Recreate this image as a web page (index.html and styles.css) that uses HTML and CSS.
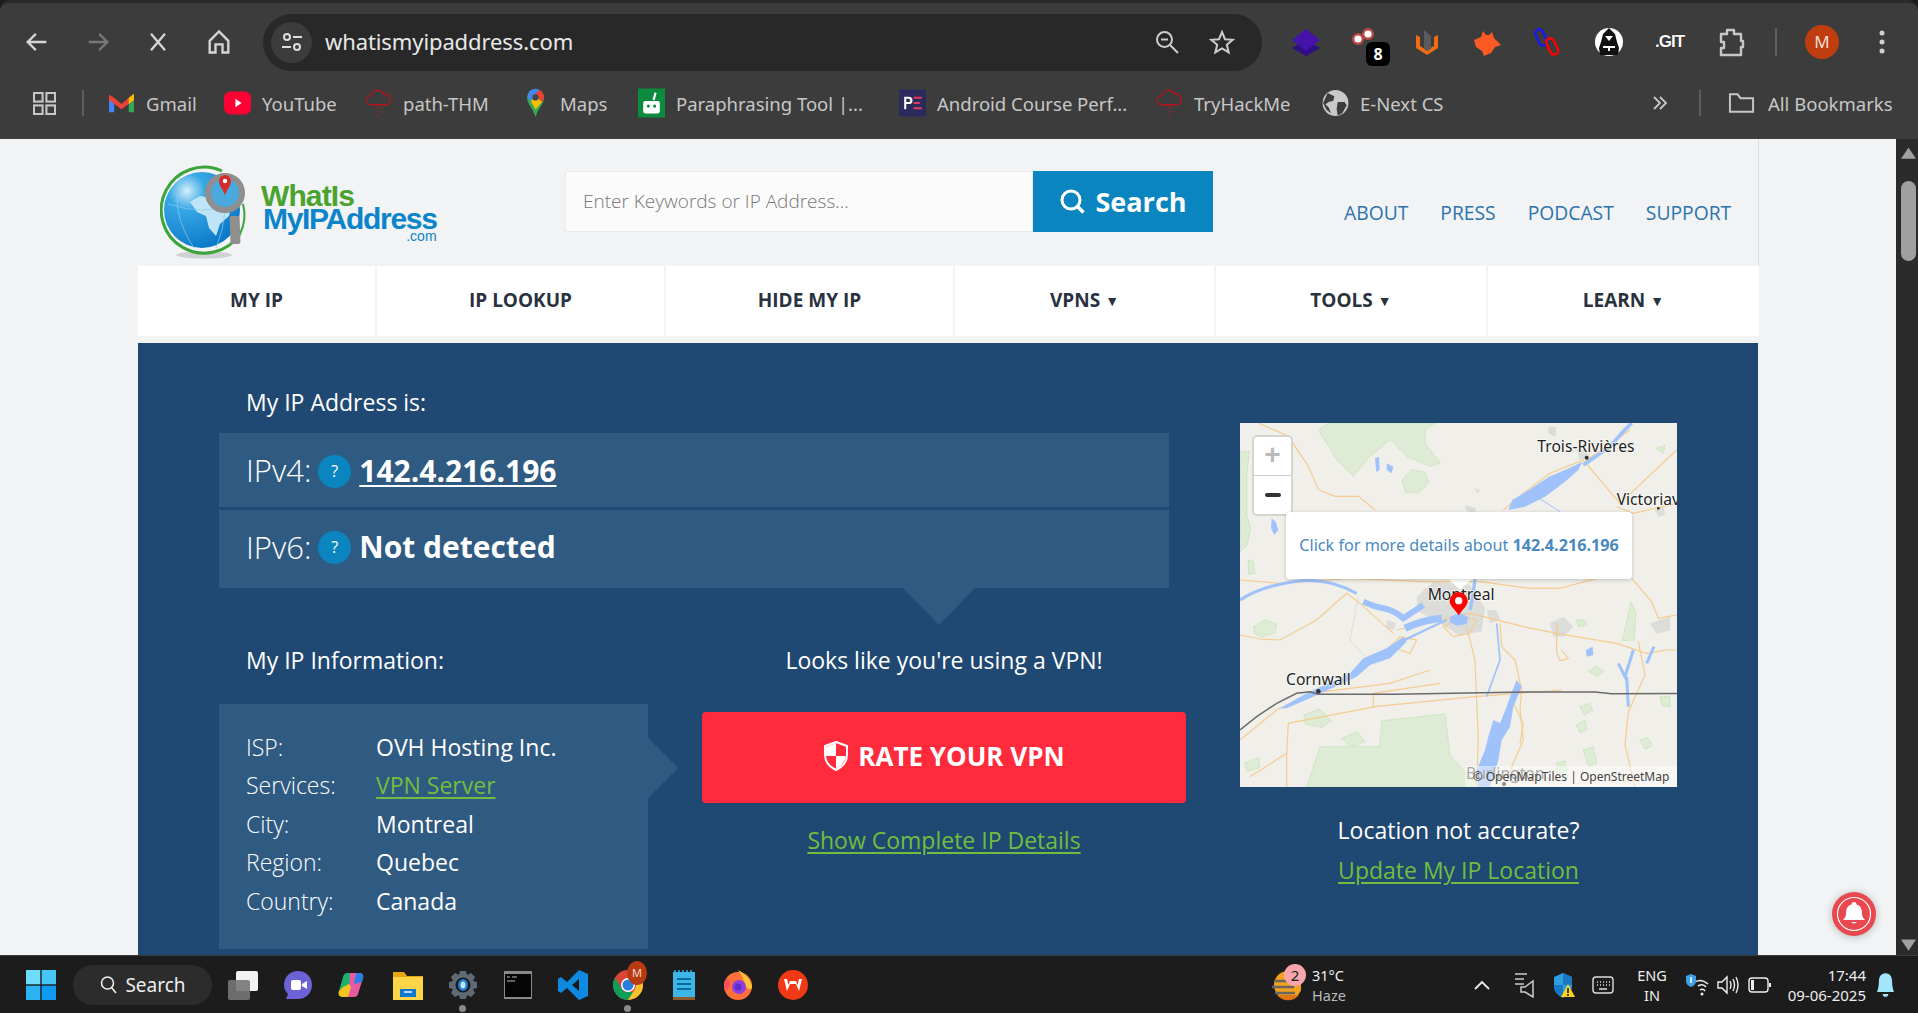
FILE: index.html
```html
<!DOCTYPE html>
<html lang="en">
<head>
    <meta charset="UTF-8">
    <title>What Is My IP Address</title>
    <link rel="stylesheet" href="styles.css">
</head>
<body>

<div class="browser">

    <!-- toolbar -->
    <div class="toolbar">
        <div class="nav-btns">
            <svg class="tb-icon" viewBox="0 0 24 24"><path d="M20 12H4M11 5l-7 7 7 7" fill="none" stroke="#d6d6d6" stroke-width="2"/></svg>
            <svg class="tb-icon" viewBox="0 0 24 24"><path d="M4 12h16M13 5l7 7-7 7" fill="none" stroke="#777" stroke-width="2"/></svg>
            <svg class="tb-icon" viewBox="0 0 24 24"><path d="M6 5l12 14M18 5L6 19" fill="none" stroke="#d6d6d6" stroke-width="2"/></svg>
            <svg class="tb-icon" viewBox="0 0 24 24"><path d="M4 11l8-8 8 8v10h-5v-7H9v7H4z" fill="none" stroke="#d6d6d6" stroke-width="2"/></svg>
        </div>
        <div class="address">
            <div class="site-chip">
                <svg width="22" height="22" viewBox="0 0 22 22"><circle cx="6" cy="6" r="3" fill="none" stroke="#ddd" stroke-width="2"/><path d="M12 6h9M1 16h9" stroke="#ddd" stroke-width="2"/><circle cx="16" cy="16" r="3" fill="none" stroke="#ddd" stroke-width="2"/></svg>
            </div>
            <span class="url">whatismyipaddress.com</span>
            <svg class="addr-icon zoom-out" viewBox="0 0 26 26"><circle cx="10.500" cy="10.500" r="7.500" fill="none" stroke="#ccc" stroke-width="2"/><path d="M7 10.500h7M16 16l8 8" stroke="#ccc" stroke-width="2"/></svg>
            <svg class="addr-icon" viewBox="0 0 26 26"><path d="M13 3l3 7.200 7.700.6-5.900 5 1.900 7.500L13 19.300l-6.700 4 1.900-7.500-5.900-5 7.700-.6z" fill="none" stroke="#ccc" stroke-width="2"/></svg>
        </div>
        <div class="extensions">
            <svg class="ext" viewBox="0 0 30 30"><path d="M15 13l14 8-14 8-14-8z" fill="#2d0e84"/><path d="M15 2l14 11-14 11L1 13z" fill="#4513a8"/></svg>
            <div class="ext ext-dots">
                <svg width="30" height="30" viewBox="0 0 30 30"><circle cx="8" cy="12" r="6" fill="#b84a4a"/><circle cx="18" cy="7" r="6" fill="#b84a4a"/><circle cx="8" cy="12" r="3.600" fill="#fff"/><circle cx="18" cy="7" r="3.600" fill="#fff"/></svg>
                <span class="ext-badge">8</span>
            </div>
            <svg class="ext" viewBox="0 0 30 30"><path d="M4 8v13l11 7 11-7V8l-4 2v9l-7 4-7-4v-9z" fill="#f26b12"/><path d="M12 3l7 6v13l-4 2-3-2z" fill="#5b5b5b"/></svg>
            <svg class="ext" viewBox="0 0 30 30"><path d="M2 13l7-3 2-6 3 4h3l3-3 2 6 7 7-6 2-4 6-7 3-2-5-6-4z" fill="#fb5b22"/></svg>
            <svg class="ext" viewBox="0 0 30 30"><g fill="none" stroke-width="2.500"><rect x="5" y="2" width="8" height="17" rx="4" transform="rotate(-25 9 10)" stroke="#1a1aee"/><rect x="16" y="11" width="8" height="17" rx="4" transform="rotate(-25 20 19)" stroke="#f00"/></g></svg>
            <svg class="ext" viewBox="0 0 30 30"><circle cx="15" cy="15" r="14" fill="#fff"/><path d="M15 1l6 6 2 8 2 6-1 7H6l-1-7 2-6 2-8z" fill="#111"/><path d="M11 9h8l-4 5z" fill="#fff"/><rect x="9" y="19" width="12" height="2" fill="#fff"/><rect x="14" y="19" width="2" height="5" fill="#fff"/></svg>
            <span class="ext ext-git">.GIT</span>
            <svg class="ext" viewBox="0 0 30 30"><path d="M5 7h6V3h7v4h7v7h2v6h-2v8H5v-7h3v-6H5z" fill="none" stroke="#c7c7c7" stroke-width="2.400" stroke-linejoin="round"/></svg>
            <span class="tb-divider"></span>
            <span class="avatar">M</span>
            <svg class="kebab" viewBox="0 0 8 28"><circle cx="4" cy="5" r="2.500" fill="#d0d0d0"/><circle cx="4" cy="14" r="2.500" fill="#d0d0d0"/><circle cx="4" cy="23" r="2.500" fill="#d0d0d0"/></svg>
        </div>
    </div>

    <!-- bookmarks -->
    <div class="bookmarks">
        <svg class="bm-apps" viewBox="0 0 24 24"><g fill="none" stroke="#c7c7c7" stroke-width="2.200"><rect x="1" y="1" width="9" height="9"/><rect x="14" y="1" width="9" height="9"/><rect x="1" y="14" width="9" height="9"/><rect x="14" y="14" width="9" height="9"/></g></svg>
        <span class="bm-divider"></span>
        <div class="bm"><svg viewBox="0 0 26 22"><path d="M1 5v15h5V9z" fill="#4285f4"/><path d="M25 5v15h-5V9z" fill="#34a853"/><path d="M1 3l5 3 7 6 7-6 5-3v5l-12 9L1 8z" fill="#ea4335"/><path d="M20 6l5-4v6l-5 4z" fill="#fbbc04"/></svg><span>Gmail</span></div>
        <div class="bm"><svg viewBox="0 0 26 26"><rect y="2" width="26" height="22" rx="6" fill="#ff0033"/><path d="M11 9l6 4-6 4z" fill="#fff"/></svg><span>YouTube</span></div>
        <div class="bm"><svg viewBox="0 0 30 34"><path d="M6 19a5 5 0 0 1 0-10 8 8 0 0 1 15-2 6 6 0 0 1 3 12z" fill="none" stroke="#b3141c" stroke-width="1.500"/><path d="M12 21h7v3h-7zM14 26h6v2h-6zM12 30h5v3h-5z" fill="#5b3436"/></svg><span>path-THM</span></div>
        <div class="bm"><svg viewBox="0 0 20 32"><path d="M10 1a9 9 0 0 1 9 9c0 7-6 11-9 21C7 21 1 17 1 10a9 9 0 0 1 9-9z" fill="#34a853"/><path d="M3 4a9 9 0 0 1 11-2l-9 12-3-4z" fill="#4285f4"/><path d="M14 2a9 9 0 0 1 5 8c0 2-1 4-2 5l-8-8z" fill="#ea4335"/><path d="M17 15l-7 8-5-9 5-5z" fill="#fbbc04"/><circle cx="10" cy="10" r="3.300" fill="#444"/></svg><span>Maps</span></div>
        <div class="bm"><svg viewBox="0 0 26 28"><rect width="26" height="28" fill="#0c8a3e"/><rect x="5" y="12" width="16" height="12" rx="2" fill="#fff"/><circle cx="10" cy="17" r="1.500" fill="#0c8a3e"/><circle cx="16" cy="17" r="1.500" fill="#0c8a3e"/><path d="M15 11l2-7" stroke="#fff" stroke-width="2"/></svg><span>Paraphrasing Tool |...</span></div>
        <div class="bm"><svg viewBox="0 0 26 26"><rect width="26" height="26" fill="#2b2a5c"/><path d="M5 7h4.500a3 3 0 0 1 0 7H7v5H5zM7 9v3h2.300a1.500 1.500 0 0 0 0-3z" fill="#fff"/><path d="M14 7h8v2h-8zM14 12h6v2h-6zM14 17h8v2h-8z" fill="#e8395b"/></svg><span>Android Course Perf...</span></div>
        <div class="bm"><svg viewBox="0 0 30 34"><path d="M6 19a5 5 0 0 1 0-10 8 8 0 0 1 15-2 6 6 0 0 1 3 12z" fill="none" stroke="#b3141c" stroke-width="1.500"/><path d="M12 21h7v3h-7zM14 26h6v2h-6zM12 30h5v3h-5z" fill="#5b3436"/></svg><span>TryHackMe</span></div>
        <div class="bm"><svg viewBox="0 0 24 24"><circle cx="12" cy="12" r="11.500" fill="#c9c9c9"/><path d="M5 3l6 3-1 4-4 1-3 2 3 3 2 5-4-3-3-6zM14 11h6l2 3-4 7-4 2-1-6z" fill="#3c3c3c"/></svg><span>E-Next CS</span></div>
        <svg class="bm-more" viewBox="0 0 18 18"><path d="M3 3l6 6-6 6M9 3l6 6-6 6" fill="none" stroke="#c7c7c7" stroke-width="1.800"/></svg>
        <span class="bm-divider"></span>
        <div class="bm bm-all"><svg viewBox="0 0 28 24"><path d="M2 21V3h8l3 4h13v14z" fill="none" stroke="#c7c7c7" stroke-width="2"/></svg><span>All Bookmarks</span></div>
    </div>

    <!-- page viewport -->
    <div class="viewport">
        <div class="page">
            <div class="site">
                <div class="site-head">
                    <div class="logo">
                        <svg class="logo-globe" viewBox="0 0 90 95">
                            <defs>
                                <radialGradient id="globeFill" cx="30%" cy="25%" r="80%">
                                    <stop offset="0" stop-color="#d5eefb"/>
                                    <stop offset=".3" stop-color="#37a8e6"/>
                                    <stop offset="1" stop-color="#0a78c8"/>
                                </radialGradient>
                            </defs>
                            <ellipse cx="44" cy="91" rx="28" ry="3.500" fill="#bbb" opacity=".6"/>
                            <path d="M62 7A43 43 0 1 0 80 70" fill="none" stroke="#3ba53a" stroke-width="3"/>
                            <path d="M83 40a43 43 0 0 1-3 30" fill="none" stroke="#3ba53a" stroke-width="2"/>
                            <circle cx="42" cy="46" r="38" fill="url(#globeFill)"/>
                            <path d="M30 38l10-6 12 2 10-4 10 8-3 14-9 8-4 12-7-8-3-12-9-4z" fill="#bfe4f7"/>
                            <path d="M8 40q34 12 70 0M20 14q-10 34 14 70M60 12q12 34-4 72" fill="none" stroke="#8cc9ec" stroke-width=".7"/>
                            <circle cx="65" cy="29" r="17" fill="#4aa9dd" stroke="#8f8f8f" stroke-width="6"/>
                            <path d="M65 11a6 6 0 0 1 6 6c0 5-4 8-6 14-2-6-6-9-6-14a6 6 0 0 1 6-6z" fill="#d62b27"/>
                            <circle cx="65" cy="17" r="2.200" fill="#fff"/>
                            <rect x="70" y="52" width="10" height="28" rx="2" transform="rotate(-2 75 66)" fill="#8f8f8f"/>
                        </svg>
                        <div class="logo-text">
                            <span class="logo-what">WhatIs</span>
                            <span class="logo-my">MyIPAddress</span>
                            <span class="logo-com">.com</span>
                        </div>
                    </div>
                    <div class="search">
                        <div class="search-input">Enter Keywords or IP Address...</div>
                        <div class="search-btn">
                            <svg width="27" height="27" viewBox="0 0 27 27"><circle cx="12" cy="12" r="9" fill="none" stroke="#fff" stroke-width="3"/><path d="M18.500 18.500l6 6" stroke="#fff" stroke-width="3.500"/></svg>
                            <span>Search</span>
                        </div>
                    </div>
                    <div class="head-links">
                        <a>ABOUT</a>
                        <a>PRESS</a>
                        <a>PODCAST</a>
                        <a>SUPPORT</a>
                    </div>
                </div>

                <ul class="main-nav">
                    <li>MY IP</li>
                    <li>IP LOOKUP</li>
                    <li>HIDE MY IP</li>
                    <li>VPNS <i class="caret">▼</i></li>
                    <li>TOOLS <i class="caret">▼</i></li>
                    <li>LEARN <i class="caret">▼</i></li>
                </ul>

                <div class="panel">
                    <div class="panel-main">
                        <div class="ip-title">My IP Address is:</div>
                        <div class="ip-box">
                            <div class="ip-row ip-row-4">
                                <span class="ip-label">IPv4:</span><span class="help">?</span><a class="ip-value ip-link">142.4.216.196</a>
                            </div>
                            <div class="ip-row ip-row-6">
                                <span class="ip-label">IPv6:</span><span class="help">?</span><span class="ip-value">Not detected</span>
                            </div>
                            <span class="ip-pointer"></span>
                        </div>
                        <div class="lower">
                            <div class="info-col">
                                <div class="info-title">My IP Information:</div>
                                <div class="info-box">
                                    <div class="info-row"><span>ISP:</span><b>OVH Hosting Inc.</b></div>
                                    <div class="info-row"><span>Services:</span><a class="green-link">VPN Server</a></div>
                                    <div class="info-row"><span>City:</span><b>Montreal</b></div>
                                    <div class="info-row"><span>Region:</span><b>Quebec</b></div>
                                    <div class="info-row"><span>Country:</span><b>Canada</b></div>
                                    <span class="info-pointer"></span>
                                </div>
                            </div>
                            <div class="vpn-col">
                                <div class="vpn-text">Looks like you're using a VPN!</div>
                                <div class="vpn-btn">
                                    <svg width="26" height="30" viewBox="0 0 26 30"><path d="M13 1l11 4v9c0 7-5 12-11 15C7 26 2 21 2 14V5z" fill="none" stroke="#fff" stroke-width="2"/><path d="M13 2v13H3V6zM13 15h10c-1 6-5 10-10 13z" fill="#fff"/></svg>
                                    <span>RATE YOUR VPN</span>
                                </div>
                                <a class="green-link vpn-details">Show Complete IP Details</a>
                            </div>
                        </div>
                    </div>

                    <div class="panel-side">
                        <div class="map">
                            <svg class="map-art" viewBox="30 39 1311 1092">
                                <rect x="30" y="39" width="1311" height="1092" fill="#f0efe9"/>
                                <!-- forest -->
                                <g fill="#dfecd5" stroke="#a9dc9c" stroke-width="2.500" stroke-dasharray="3 3">
                                    <path d="M265 60l30-21h320l-30 20 0 40 45 60-30 10-70-30-50-50-60 50-50 60-50-50-30-50z"/>
                                    <path d="M30 125h28l-8 70 0 120 12 40-10 50-22 20z"/>
                                    <path d="M516 210l30-32 40 10 10 30-30 30-40-2z"/>
                                    <path d="M70 650l35-20 35 12-5 25-40 15-22-12z"/>
                                    <path d="M1178 690l25-115 15 30-5 85-35 2z"/>
                                    <path d="M1075 785l25-18 22 18-20 14z"/>
                                    <path d="M1050 890l30-10 8 22-25 12zM1230 990l22-6 16 22-22 12zM1040 945l25-15 5 30-20 8z"/>
                                    <path d="M222 915l45-18 38 35-30 20-50-10z"/>
                                    <path d="M270 1010l180 0 5-78 190-20 15 125 90 94H230z"/>
                                    <path d="M335 985l45-20 25 30-45 15zM45 1060l40-18 5 30-40 12z"/>
                                    <path d="M1060 1020l30-10 10 50-25 10zM1290 860l30 0 0 30-25-4zM1280 115l25-10-5 25zM1040 630l25 0 5 15-25 5z"/>
                                    <path d="M54 450l16 4 4 38-18 0zM980 1060l25-8 5 30-30 8z"/>
                                </g>
                                <!-- built up areas -->
                                <g fill="#dcdcd9">
                                    <path d="M560 560l50-45 110 10 45 70-10 70-70 10-60-40-60-30zM960 640l40-20 30 30-30 30-30 0zM1260 640l60-20 0 40-40 12zM770 600l30 0 10 30-30 10zM470 630l30 10-10 20-20-5z"/>
                                    <path d="M705 285l35 10-8 16-25-10zM1040 120l30 0 10 20-30 10zM955 50l25 0-5 30-20-10zM730 235l20 5-5 10zM1275 300l25-10 5 25-20 5z"/>
                                </g>
                                <!-- roads -->
                                <g fill="none" stroke="#f6cb90" stroke-width="3.500">
                                    <path d="M85 39l90 40 60 90 30 70 50 20 70 0 50 40"/>
                                    <path d="M30 510l120 10 210-15 220 10 170 0 150 20 90 0 110-30"/>
                                    <path d="M1205 505l60 70 20 50 55-10"/>
                                    <path d="M30 675l60 12 60 3 110-60 90-80 40 30 100 90"/>
                                    <path d="M500 660l130-30 90-20 40 10 120 30 100 20 180 30 90 30 60-10 40 0"/>
                                    <path d="M710 650l25 100 5 130 5 100-5 150"/>
                                    <path d="M810 640l5 70 40 40 20 90-5 60 10 90-30 70-30 70"/>
                                    <path d="M30 990l110-90 100-50 240-30 120-40"/>
                                    <path d="M60 1100l110-70 5-90 260-50 300-30 130-10 130-10"/>
                                    <path d="M1225 695l20 100-50 110-10 100 30 126"/>
                                    <path d="M980 640v90l10 22 25-6-20-26"/>
                                    <path d="M820 300l60-50 80-60 100-40 110 130 170-160"/>
                                    <path d="M1070 150l130-90M1160 290l50 20 131-30"/>
                                    <path d="M480 710l60 20 20-40-50-10zM640 650l30 30 50-10 20-40-40-10z"/>
                                    <path d="M170 1030l0 101M430 890l0-40 200-30M850 880l30 60-10 60"/>
                                </g>
                                <!-- water -->
                                <g fill="#a0c2fb">
                                    <path d="M835 300l12-30 50-30 60-40 60-25 40-20-12 25-40 35-60 45-60 30z"/>
                                    <path d="M860 810l15 20-25 60-10 60-25 40-10 60-25 80h-35l-5-50 25-60 10-40 15-50 20 10 20-50 10-30z"/>
                                    <path d="M435 145l12-5 2 40-10 6zM470 160l20 10-5 20-15-10zM125 325l12 10 8 25-12 15-10-20zM1068 720l20-10 2 25-20 5z"/>
                                    <path d="M660 620l30-12 25 14-5 20-30 5-20-10z"/>
                                    <path d="M150 895l80-45 130-60 40-45 70-30 50-35 10 15-50 50-60 20-40 35-130 60-80 35z"/>
                                </g>
                                <g fill="none" stroke="#a0c2fb">
                                    <path d="M30 570q60-40 160-55t190 35" stroke-width="9"/>
                                    <path d="M400 575q30 15 60 20t60 30q30-20 60-40" stroke-width="18"/>
                                    <path d="M525 655q50-25 110-30" stroke-width="22"/>
                                    <path d="M520 692q60-30 130-62" stroke-width="7"/>
                                    <path d="M720 600l10-50 5-45" stroke-width="10"/>
                                    <path d="M800 640l10 110-40 110" stroke-width="5"/>
                                    <path d="M1060 165l80-55 35-40 30-31" stroke-width="11"/>
                                    <path d="M920 260l70 45" stroke-width="3"/>
                                    <path d="M1165 760l20 40 25-80M1190 800l5 90M1250 760l22-50" stroke-width="9"/>
                                </g>
                                <path d="M360 690l25-130M360 690l45 50" fill="none" stroke="#bbb" stroke-width="2" stroke-dasharray="3 3"/>
                                <path d="M30 960l50-40 60-40 60-30 40-5 25 8 230 0 395-7 205 0 50 5 246-1" fill="none" stroke="#6a6a6a" stroke-width="4.500"/>
                                <g fill="#333">
                                    <circle cx="1070" cy="143" r="6"/>
                                    <circle cx="265" cy="844" r="7"/>
                                    <circle cx="822" cy="1122" r="6"/>
                                    <circle cx="1285" cy="295" r="4"/>
                                </g>
                                <g class="map-label">
                                    <text x="922" y="126">Trois-Rivières</text>
                                    <text x="1160" y="285">Victoriav</text>
                                    <text x="593" y="570">Montreal</text>
                                    <text x="168" y="825">Cornwall</text>
                                    <text class="map-faint" x="708" y="1108">Burlington</text>
                                </g>
                                <path d="M686 546a27 27 0 0 1 27 27c0 15-17 26-27 43-10-17-27-28-27-43a27 27 0 0 1 27-27z" fill="#f00"/>
                                <circle cx="686" cy="572" r="11" fill="#fff"/>
                                <path d="M655 507h70l-35 32z" fill="#fff"/>
                            </svg>
                            <div class="zoom-ctl"><span class="zoom-in">+</span><span class="zoom-minus"></span></div>
                            <div class="map-popup">Click for more details about <b>142.4.216.196</b></div>
                            <div class="map-attr">© OpenMapTiles | OpenStreetMap</div>
                        </div>
                        <div class="loc-text">Location not accurate?</div>
                        <a class="green-link loc-link">Update My IP Location</a>
                    </div>
                </div>
            </div>

            <div class="bell">
                <svg width="36" height="36" viewBox="0 0 36 36"><circle cx="18" cy="18" r="16.500" fill="none" stroke="#fff" stroke-width="1.200"/><path d="M18 6a2.500 2.500 0 0 1 2.500 2.500c4 1 5.500 4.500 5.500 9 0 2 .500 4 3 6.500H7c2.500-2.500 3-4.500 3-6.500 0-4.500 1.500-8 5.500-9A2.500 2.500 0 0 1 18 6zM15.500 26h5a2.500 1.500 0 0 1-5 0z" fill="#fff"/></svg>
            </div>
        </div>
        <div class="scrollbar">
            <svg class="sb-arrow" viewBox="0 0 16 12"><path d="M8 0l8 12H0z" fill="#a0a0a0"/></svg>
            <span class="sb-thumb"></span>
            <svg class="sb-arrow sb-down" viewBox="0 0 16 12"><path d="M8 12L0 0h16z" fill="#a0a0a0"/></svg>
        </div>
    </div>

    <!-- taskbar -->
    <div class="taskbar">
        <svg class="tk-icon tk-win" viewBox="0 0 30 30"><rect width="14.300" height="14.300" fill="#6fdcfb"/><rect x="15.700" width="14.300" height="14.300" fill="#45c6f7"/><rect y="15.700" width="14.300" height="14.300" fill="#2bb4f4"/><rect x="15.700" y="15.700" width="14.300" height="14.300" fill="#109af0"/></svg>
        <div class="tk-search">
            <svg width="20" height="20" viewBox="0 0 20 20"><circle cx="8.500" cy="8" r="6" fill="none" stroke="#eee" stroke-width="1.600"/><path d="M12.500 12.500L17 18" stroke="#eee" stroke-width="1.600"/></svg>
            <span>Search</span>
        </div>
        <div class="tk-apps">
            <svg class="tk-icon" viewBox="0 0 30 30"><rect x="8" y="1" width="22" height="20" rx="2" fill="#f2f2f2"/><rect y="10" width="22" height="20" rx="2" fill="#777" opacity=".9"/></svg>
            <svg class="tk-icon" viewBox="0 0 30 30"><path d="M15 1c8 0 14 6 14 14s-6 14-14 14H3l2-5C2 21 1 18 1 15 1 7 7 1 15 1z" fill="#6b62d6"/><rect x="8" y="10" width="10" height="10" rx="2" fill="#fff"/><path d="M19 14l5-3v8l-5-3z" fill="#fff"/></svg>
            <svg class="tk-icon" viewBox="0 0 30 30"><path d="M9 3h9l-6 24H5c-4 0-5-3-4-6l4-14c1-3 2-4 4-4z" fill="#18b26b"/><path d="M12 3h9c3 0 5 2 4 5l-5 16c-1 3-3 3-6 3h-4z" fill="#e65aa0"/><path d="M18 3h3c3 0 5 2 4 5l-1 4-8 2z" fill="#2a7fe6"/><path d="M5 17l6-3 2 3-3 10H5c-4 0-5-3-4-6z" fill="#f2c41d"/></svg>
            <svg class="tk-icon" viewBox="0 0 30 30"><path d="M0 2h11l3 4h16v24H0z" fill="#e8a60e"/><rect y="7" width="30" height="23" fill="#fdd648"/><rect x="7" y="19" width="16" height="8" fill="#0c78d0"/><rect x="11" y="21" width="8" height="2" fill="#fff" opacity=".7"/></svg>
            <svg class="tk-icon" viewBox="0 0 30 30"><path d="M12 1h6l1 4 4-2 4 4-2 4 4 1v6l-4 1 2 4-4 4-4-2-1 4h-6l-1-4-4 2-4-4 2-4-4-1v-6l4-1-2-4 4-4 4 2z" fill="#5f6a75"/><circle cx="15" cy="15" r="7.500" fill="#1a1a1a"/><ellipse cx="15" cy="15" rx="5" ry="6" fill="#1f7fd6"/><ellipse cx="15" cy="15" rx="2.500" ry="3.500" fill="#bfe3fa"/></svg>
            <svg class="tk-icon" viewBox="0 0 30 30"><rect width="28" height="28" x="1" y="1" fill="#8a8a8a"/><rect x="2" y="4" width="26" height="23" fill="#050505"/><path d="M4 7h3M9 7h5M4 11h8" stroke="#bbb" stroke-width="1.200"/></svg>
            <svg class="tk-icon" viewBox="0 0 30 30"><path d="M21 0l9 4v22l-9 4-12-12-6 5-3-2v-12l3-2 6 5zM21 9l-7 6 7 6z" fill="#0e8ae0"/></svg>
            <div class="tk-chrome">
                <svg class="tk-icon" viewBox="0 0 30 30"><circle cx="15" cy="15" r="15" fill="#db4437"/><path d="M15 30A15 15 0 0 1 2 7.500L9 19a7 7 0 0 0 6 3l6 0z" fill="#0f9d58"/><path d="M30 15a15 15 0 0 1-15 15l7-11a7 7 0 0 0-1-8h8a15 15 0 0 1 1 4z" fill="#fbc02d"/><circle cx="15" cy="15" r="7" fill="#fff"/><circle cx="15" cy="15" r="5.500" fill="#2a7de1"/></svg>
                <span class="tk-badge">M</span>
            </div>
            <svg class="tk-icon tk-notepad" viewBox="0 0 22 30"><rect y="2" width="22" height="28" fill="#3db7e8"/><rect y="27" width="22" height="3" fill="#8d5a2b"/><path d="M2 2V0M6 2V0M10 2V0M14 2V0M18 2V0" stroke="#2a8ebd" stroke-width="2"/><path d="M4 9h14M4 14h14M4 19h14" stroke="#0c6a98" stroke-width="2"/></svg>
            <svg class="tk-icon" viewBox="0 0 30 30"><circle cx="15" cy="16" r="14" fill="#ff7139"/><path d="M15 0c6 3 12 8 14 16 0 4-2 4-6 1-2-7-4-12-8-17z" fill="#ffc436"/><path d="M1 16c0-3 1-6 3-8l4 5-4 8z" fill="#ff4f5e"/><circle cx="16" cy="17" r="7" fill="#8f3ee0"/><circle cx="15" cy="17" r="3.500" fill="#5b2fc7"/></svg>
            <svg class="tk-icon" viewBox="0 0 30 30"><circle cx="15" cy="15" r="15" fill="#f03a17"/><path d="M6 9l3 12 3-7h6l3 7 3-12h-3l-1.500 6L18 11h-6l-1.500 4L9 9z" fill="#fff"/></svg>
        </div>
        <span class="tk-dot tk-dot-settings"></span>
        <span class="tk-dot tk-dot-chrome"></span>

        <div class="tk-weather">
            <svg width="30" height="32" viewBox="0 0 30 32"><circle cx="17" cy="16" r="14" fill="#f3a21b"/><path d="M4 12h22M1 18h22M4 24h20" stroke="#666" stroke-width="2.500"/><path d="M6 26a14 14 0 0 0 22 0z" fill="#e07412"/></svg>
            <span class="tk-wbadge">2</span>
            <div class="tk-wtext"><span>31°C</span><span class="tk-haze">Haze</span></div>
        </div>
        <div class="tk-tray">
            <svg class="tray-icon tray-chev" viewBox="0 0 16 10"><path d="M1 9l7-7 7 7" fill="none" stroke="#eee" stroke-width="1.800"/></svg>
            <svg class="tray-icon tray-note" viewBox="0 0 22 26"><path d="M1 2h12M1 7h9M1 12h9" stroke="#ccc" stroke-width="1.500"/><path d="M11 15l8-6v16l-8-5H7v-5z" fill="none" stroke="#ccc" stroke-width="1.500"/></svg>
            <svg class="tray-icon tray-shield" viewBox="0 0 22 26"><path d="M10 1l9 4v9c0 6-4 9-9 12-5-3-9-6-9-12V5z" fill="#2d9fe0"/><path d="M10 1l9 4v8H10zM1 13h9v13c-5-3-9-6-9-12z" fill="#1878c4"/><path d="M15 12l7 13H8z" fill="#fcd116"/><path d="M15 16v5M15 22v2" stroke="#111" stroke-width="1.500"/></svg>
            <svg class="tray-icon tray-kbd" viewBox="0 0 22 18"><rect x="1" y="1" width="20" height="16" rx="3" fill="none" stroke="#ddd" stroke-width="1.400"/><path d="M5 6h1M8 6h1M11 6h1M14 6h1M17 6h1M5 9h1M8 9h1M11 9h1M14 9h1M17 9h1M7 13h8" stroke="#ddd" stroke-width="1.400"/></svg>
            <div class="tk-lang"><span>ENG</span><span>IN</span></div>
            <svg class="tray-icon tray-wifi" viewBox="0 0 24 24"><path d="M9 9q6-4 13 2M12 13q5-3 8 1M14 17q3-2 5 1" fill="none" stroke="#eee" stroke-width="1.500"/><circle cx="16" cy="21" r="1.500" fill="#eee"/><path d="M5 1l5 2v5c0 3-2 5-5 6-3-1-5-3-5-6V3z" fill="#3fa0e8"/><path d="M5 4v6" stroke="#fff" stroke-width="1.500"/></svg>
            <svg class="tray-icon tray-vol" viewBox="0 0 22 22"><path d="M1 8h4l5-5v16l-5-5H1z" fill="none" stroke="#eee" stroke-width="1.400"/><path d="M13 7q2 4 0 8M16 5q3 6 0 12M19 3q4 8 0 16" fill="none" stroke="#eee" stroke-width="1.400"/></svg>
            <svg class="tray-icon tray-batt" viewBox="0 0 24 16"><rect x="1" y="1" width="19" height="14" rx="3" fill="none" stroke="#eee" stroke-width="1.400"/><rect x="3" y="3" width="3" height="10" fill="#eee"/><path d="M22 6v4" stroke="#eee" stroke-width="2"/></svg>
            <div class="tk-clock"><span>17:44</span><span>09-06-2025</span></div>
            <svg class="tray-icon tray-bell" viewBox="0 0 18 26"><path d="M9 0c5 0 7 4 7 9 0 5 1 8 2 11H0c1-3 2-6 2-11 0-5 2-9 7-9zM6 22h6a3 3 0 0 1-6 0z" fill="#a3e6fb"/></svg>
        </div>
    </div>
</div>

</body>
</html>
```

FILE: styles.css
```css
* {
    box-sizing: border-box;
}

html, body {
    margin: 0;
    height: 100%;
    overflow: hidden;
}

body {
    font-family: "Open Sans", "Noto Sans", sans-serif;
    background-color: #1c1c1c;
}

a {
    cursor: pointer;
}

.browser {
    width: 1918px;
    height: 1013px;
    display: flex;
    flex-direction: column;
}

/* toolbar */
.toolbar {
    height: 77px;
    padding: 11px 0 7px;
    display: flex;
    align-items: center;
    background-color: #3c3c3c;
    border-top: 3px solid #2b2b2b;
    border-radius: 10px 10px 0 0;
}

.nav-btns {
    width: 263px;
    padding-left: 23px;
    display: flex;
    gap: 32.500px;
}

.tb-icon {
    width: 28px;
    height: 28px;
}

.address {
    width: 999px;
    height: 57px;
    display: flex;
    align-items: center;
    padding-left: 8px;
    background-color: #282828;
    border-radius: 29px;
}

.site-chip {
    width: 41px;
    height: 41px;
    display: flex;
    align-items: center;
    justify-content: center;
    background-color: #3c3c3c;
    border-radius: 50%;
}

.url {
    margin-left: 13px;
    padding-bottom: 2px;
    color: #e8e8e8;
    font-family: "Noto Sans", sans-serif;
    font-size: 22px;
    letter-spacing: -.1px;
    flex: 1;
}

.addr-icon {
    width: 26px;
    height: 26px;
    margin-right: 27px;
}

.addr-icon.zoom-out {
    margin-right: 29px;
}

.extensions {
    margin-left: 29px;
    display: grid;
    grid-template-columns: 59px 62px 60px 60px 62px 56px 66px 59px 30px 73px 8px;
    align-items: center;
    justify-items: start;
}

.ext {
    width: 30px;
    height: 30px;
}

.ext-dots {
    position: relative;
}

.ext-badge {
    position: absolute;
    left: 16px;
    top: 15px;
    width: 24px;
    height: 24px;
    background-color: #000;
    border-radius: 6px;
    color: #fff;
    font-size: 16px;
    font-weight: 700;
    line-height: 24px;
    text-align: center;
}

.ext-git {
    color: #fff;
    font-family: "Liberation Sans", sans-serif;
    font-size: 17px;
    font-weight: 700;
    line-height: 30px;
    letter-spacing: -1px;
    white-space: nowrap;
    text-shadow: 0 0 1px #000;
    padding-left: 5px;
}

.tb-divider {
    width: 2px;
    height: 28px;
    background-color: #5e5e5e;
}

.avatar {
    width: 34px;
    height: 34px;
    background-color: #c03d10;
    border-radius: 50%;
    color: #f5dcd2;
    font-family: "Noto Sans", sans-serif;
    font-size: 17px;
    line-height: 34px;
    text-align: center;
}

.kebab {
    width: 8px;
    height: 28px;
}

/* bookmarks */
.bookmarks {
    height: 62px;
    padding: 0 0 10px 33px;
    display: grid;
    grid-template-columns: 49px 26px 116px 141px 157px 116px 261px 257px 166px 329px 48px 29px auto;
    align-items: center;
    background-color: #3c3c3c;
    color: #c7c7c7;
    font-family: "Noto Sans", sans-serif;
    font-size: 18.500px;
}

.bm-apps {
    width: 23px;
    height: 23px;
}

.bm-divider {
    width: 2px;
    height: 26px;
    background-color: #5e5e5e;
}

.bm {
    display: flex;
    align-items: center;
    gap: 11px;
    white-space: nowrap;
}

.bm svg {
    width: 27px;
    height: 30px;
    flex: none;
}

.bm-all {
    gap: 13px;
}

.bm-more {
    width: 18px;
    height: 18px;
}

/* page */
.viewport {
    height: 816px;
    display: flex;
    overflow: hidden;
}

.page {
    position: relative;
    flex: 1;
    background-color: #f1f3f5;
    overflow: hidden;
}

.site {
    width: 1621px;
    margin-left: 138px;
}

.site-head {
    height: 127px;
    display: flex;
    align-items: flex-start;
    border-right: 1px solid #d8dee4;
}

.logo {
    width: 427px;
    padding: 25px 0 0 22px;
    display: flex;
}

.logo-globe {
    width: 90px;
    height: 95px;
}

.logo-text {
    margin: 17px 0 0 11px;
    display: flex;
    flex-direction: column;
    font-family: "Liberation Sans", sans-serif;
    font-weight: 700;
    line-height: 1;
}

.logo-what {
    color: #4ba32f;
    font-size: 30px;
    letter-spacing: -.9px;
    height: 23px;
}

.logo-my {
    margin-left: 2px;
    color: #0c84c9;
    font-size: 30px;
    letter-spacing: -1.300px;
    height: 25px;
}

.logo-com {
    align-self: flex-end;
    color: #0c84c9;
    font-size: 14px;
    font-weight: 400;
}

.search {
    width: 648px;
    margin-top: 32px;
    display: flex;
}

.search-input {
    width: 468px;
    height: 61px;
    padding-left: 17px;
    background-color: #fbfbfb;
    border: 1px solid #e9ebee;
    color: #777;
    font-size: 19px;
    font-weight: 300;
    line-height: 58px;
}

.search-btn {
    width: 180px;
    height: 61px;
    display: flex;
    align-items: center;
    justify-content: center;
    gap: 9px;
    background-color: #0a85bf;
    color: #fff;
    font-size: 27px;
    font-weight: 700;
}

.head-links {
    margin: 62px 0 0 131px;
    display: flex;
    gap: 32px;
    font-size: 19.300px;
    line-height: 24px;
    color: #2d73ab;
}

.main-nav {
    height: 70px;
    margin: 0 0 7px;
    padding: 0;
    display: grid;
    grid-template-columns: 237px 287px 287px 259px 270px 1fr;
    gap: 2px;
    list-style-type: none;
    color: #2a3240;
    font-size: 19px;
    font-weight: 700;
}

.main-nav li {
    padding-bottom: 2px;
    display: flex;
    align-items: center;
    justify-content: center;
    gap: 5px;
    background-color: white;
}

.caret {
    font-size: 14px;
    font-style: normal;
}

.panel {
    width: 1620px;
    height: 640px;
    padding-left: 81px;
    display: flex;
    background-color: #1f4873;
    color: white;
}

.panel-main {
    width: 967px;
}

.ip-title {
    margin-top: 44px;
    margin-bottom: 16px;
    padding-left: 27px;
    font-size: 23px;
    line-height: 30px;
}

.ip-box {
    position: relative;
    width: 950px;
}

.ip-row {
    padding-left: 27px;
    display: flex;
    align-items: center;
    background-color: #2f5a82;
}

.ip-row-4 {
    height: 74px;
    margin-bottom: 3px;
}

.ip-row-6 {
    height: 78px;
    padding-bottom: 5px;
}

.ip-label {
    font-size: 31px;
    font-weight: 300;
}

.help {
    width: 33px;
    height: 33px;
    margin: 2px 8px 0 7px;
    background-color: #0a85bf;
    border-radius: 50%;
    font-size: 16px;
    line-height: 33px;
    text-align: center;
}

.ip-value {
    font-size: 30px;
    font-weight: 700;
}

.ip-link {
    text-decoration: underline;
    text-decoration-thickness: 2px;
    text-underline-offset: 3px;
}

.ip-pointer {
    position: absolute;
    left: 684px;
    top: 155px;
    width: 0;
    height: 0;
    border-left: 36px solid transparent;
    border-right: 36px solid transparent;
    border-top: 37px solid #2f5a82;
}

.lower {
    display: flex;
}

.info-col {
    width: 429px;
    margin-top: 57px;
}

.info-title {
    padding-left: 27px;
    font-size: 23px;
    line-height: 30px;
    margin-bottom: 29px;
}

.info-box {
    position: relative;
    height: 245px;
    padding: 24px 0 0 27px;
    background-color: #2f5a82;
}

.info-row {
    display: flex;
    font-size: 23px;
    line-height: 38.400px;
}

.info-row span {
    width: 130px;
    font-weight: 300;
}

.info-row b {
    font-weight: 400;
}

.info-pointer {
    position: absolute;
    left: 429px;
    top: 34px;
    width: 0;
    height: 0;
    border-top: 30px solid transparent;
    border-bottom: 30px solid transparent;
    border-left: 30px solid #2f5a82;
}

.green-link {
    color: #6fbe3f;
    text-decoration: underline;
    text-underline-offset: 3px;
}

.vpn-col {
    width: 484px;
    margin-left: 54px;
    margin-top: 57px;
    text-align: center;
}

.vpn-text {
    font-size: 23px;
    line-height: 30px;
    margin-bottom: 37px;
}

.vpn-btn {
    height: 91px;
    padding-bottom: 4px;
    display: flex;
    align-items: center;
    justify-content: center;
    gap: 9px;
    background-color: #ff2a3c;
    border-radius: 4px;
    font-size: 26px;
    font-weight: 700;
    margin-bottom: 22px;
}

.vpn-details {
    font-size: 23px;
    line-height: 30px;
}

.panel-side {
    width: 437px;
    margin-left: 54px;
    margin-top: 80px;
    text-align: center;
}

.map {
    position: relative;
    height: 364px;
    margin-bottom: 28px;
    overflow: hidden;
}

.map-art {
    display: block;
    width: 437px;
    height: 364px;
}

.map-label text {
    fill: #222;
    font-family: "Noto Sans", sans-serif;
    font-size: 47px;
    paint-order: stroke;
    stroke: rgba(255, 255, 255, 0.75);
    stroke-width: 5px;
}

.map-label .map-faint {
    fill: #666;
    stroke: none;
}

.zoom-ctl {
    position: absolute;
    left: 12px;
    top: 12px;
    width: 41px;
    height: 81px;
    display: flex;
    flex-direction: column;
    background-color: white;
    border: 2px solid #d5d5d0;
    border-radius: 5px;
}

.zoom-in {
    height: 39px;
    border-bottom: 1px solid #ccc;
    color: #bbb;
    font-family: "Liberation Sans", sans-serif;
    font-size: 28px;
    font-weight: 700;
    line-height: 36px;
}

.zoom-minus {
    width: 16px;
    height: 4px;
    margin: 17px auto 0;
    background-color: #333;
    border-radius: 2px;
}

.map-popup {
    position: absolute;
    left: 46px;
    top: 89px;
    width: 346px;
    height: 67px;
    background-color: white;
    border-radius: 4px;
    box-shadow: 0 1px 4px rgba(0, 0, 0, 0.2);
    color: #4a89bf;
    font-family: "Noto Sans", sans-serif;
    font-size: 16.200px;
    line-height: 67px;
    white-space: nowrap;
}

.map-attr {
    position: absolute;
    right: 0;
    bottom: 0;
    width: 212px;
    height: 21px;
    background-color: rgba(255, 255, 255, 0.45);
    color: #444;
    font-family: "Noto Sans", sans-serif;
    font-size: 12px;
    line-height: 21px;
}

.loc-text {
    font-size: 23px;
    line-height: 30px;
    margin-bottom: 10px;
}

.loc-link {
    font-size: 23px;
    line-height: 30px;
}

.bell {
    position: absolute;
    left: 1832px;
    top: 753px;
    width: 44px;
    height: 44px;
    display: flex;
    align-items: center;
    justify-content: center;
    background-color: #e8484e;
    border-radius: 50%;
    box-shadow: 0 1px 8px rgba(0, 0, 0, 0.25);
}

.scrollbar {
    width: 22px;
    padding: 8px 0 0 5px;
    background-color: #2b2b2b;
    display: flex;
    flex-direction: column;
}

.sb-arrow {
    width: 15px;
    height: 12px;
}

.sb-thumb {
    width: 15px;
    height: 80px;
    margin-top: 22px;
    background-color: #a0a0a0;
    border-radius: 8px;
}

.sb-down {
    margin-top: 678px;
}

/* taskbar */
.taskbar {
    position: relative;
    height: 58px;
    display: flex;
    align-items: center;
    background-color: #1c1c1c;
    border-top: 1px solid #3a3a3a;
    color: #eee;
    font-family: "Noto Sans", sans-serif;
    font-size: 14.500px;
}

.tk-icon {
    width: 30px;
    height: 30px;
    flex: none;
}

.tk-win {
    margin-left: 26px;
}

.tk-search {
    width: 139px;
    height: 40px;
    margin-left: 17px;
    display: flex;
    align-items: center;
    justify-content: center;
    gap: 6px;
    background-color: #2c2c2c;
    border-radius: 20px;
    font-size: 19px;
}

.tk-apps {
    margin-left: 16px;
    display: grid;
    grid-template-columns: repeat(9, 55px) 55px 54px;
    align-items: center;
}

.tk-chrome {
    position: relative;
    width: 30px;
    height: 30px;
}

.tk-badge {
    position: absolute;
    left: 14px;
    top: -9px;
    width: 20px;
    height: 24px;
    background-color: #b83a10;
    border-radius: 50%;
    color: #f5dcd2;
    font-size: 11px;
    line-height: 24px;
    text-align: center;
}

.tk-notepad {
    width: 22px;
    margin-left: 5px;
}

.tk-dot {
    position: absolute;
    top: 49px;
    width: 7px;
    height: 7px;
    background-color: #8a8a8a;
    border-radius: 50%;
}

.tk-dot-settings {
    left: 459px;
}

.tk-dot-chrome {
    left: 624px;
}

.tk-weather {
    position: relative;
    margin-left: 439px;
    display: flex;
    align-items: center;
    gap: 11px;
}

.tk-wbadge {
    position: absolute;
    left: 13px;
    top: -1px;
    width: 22px;
    height: 22px;
    background-color: #f8a5ad;
    border-radius: 50%;
    color: #222;
    font-size: 15px;
    line-height: 22px;
    text-align: center;
}

.tk-wtext {
    display: flex;
    flex-direction: column;
    line-height: 20px;
}

.tk-haze {
    color: #bbb;
}

.tk-tray {
    position: absolute;
    left: 1474px;
    top: 0;
    height: 58px;
    display: flex;
    align-items: center;
}

.tray-icon {
    flex: none;
}

.tray-chev {
    width: 16px;
    height: 10px;
}

.tray-note {
    width: 22px;
    height: 26px;
    margin-left: 24px;
}

.tray-shield {
    width: 22px;
    height: 26px;
    margin-left: 17px;
}

.tray-kbd {
    width: 22px;
    height: 18px;
    margin-left: 17px;
}

.tk-lang {
    width: 40px;
    margin-left: 18px;
    display: flex;
    flex-direction: column;
    text-align: center;
    line-height: 20px;
}

.tray-wifi {
    width: 24px;
    height: 24px;
    margin-left: 14px;
}

.tray-vol {
    width: 22px;
    height: 22px;
    margin-left: 7px;
}

.tray-batt {
    width: 24px;
    height: 16px;
    margin-left: 9px;
}

.tk-clock {
    width: 86px;
    margin-left: 8px;
    display: flex;
    flex-direction: column;
    text-align: right;
    font-size: 15px;
    line-height: 20px;
}

.tray-bell {
    width: 17px;
    height: 25px;
    margin-left: 11px;
}
```
